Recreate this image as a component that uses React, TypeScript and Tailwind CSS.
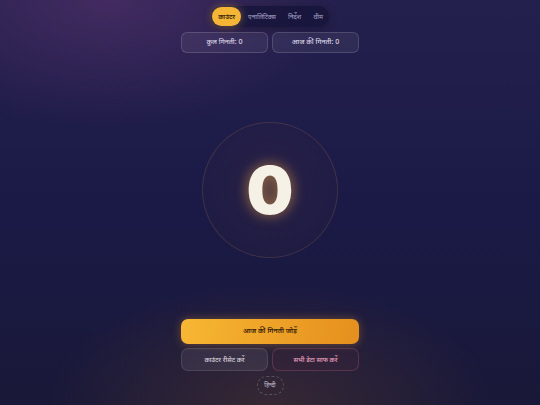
import { useState } from 'react'

const tabs = ['काउंटर', 'एनालिटिक्स', 'निर्देश', 'थीम']

export default function App() {
  const [active, setActive] = useState(0)
  const [count, setCount] = useState(0)

  return (
    <div
      className="relative flex h-[405px] w-full flex-col items-center overflow-hidden bg-[#1a1943] bg-[radial-gradient(ellipse_60%_45%_at_20%_0%,rgba(92,52,112,0.55),transparent_70%),radial-gradient(ellipse_55%_40%_at_50%_100%,rgba(90,60,45,0.45),transparent_75%),linear-gradient(180deg,#24204d_0%,#1b1a47_50%,#191838_100%)] text-[#e8e2ee]"
      style={{ fontFamily: '"Noto Sans", "Noto Sans Devanagari", "Lohit Devanagari", sans-serif' }}
    >
      <nav className="mt-[6px] flex h-[21px] items-center gap-[2px] rounded-full bg-[#15143a]/80 px-[1px] shadow-[0_2px_8px_rgba(0,0,0,0.3)]">
        {tabs.map((t, i) => (
          <button
            key={t}
            onClick={() => setActive(i)}
            className={
              i === active
                ? 'flex h-[19px] items-center rounded-full bg-[#f5b537] px-[6px] text-[6.5px] font-semibold text-[#3b260c] shadow-[0_0_8px_rgba(245,181,55,0.45)]'
                : 'flex h-[19px] items-center rounded-full px-[5px] text-[6.5px] text-[#a9a3c6]'
            }
          >
            {t}
          </button>
        ))}
      </nav>

      <div className="mt-[5px] grid w-[178px] grid-cols-2 gap-[4px]">
        <div className="flex h-[21px] items-center justify-center rounded-[6px] border border-white/15 bg-white/[0.06] text-[7px] font-medium text-[#ddd6e6]">
          कुल गिनती: {count}
        </div>
        <div className="flex h-[21px] items-center justify-center rounded-[6px] border border-white/15 bg-white/[0.06] text-[7px] font-medium text-[#ddd6e6]">
          आज की गिनती: {count}
        </div>
      </div>

      <div className="flex flex-1 items-center justify-center pt-[8px]">
        <div className="flex h-[136px] w-[136px] items-center justify-center rounded-full border border-[#f5b05a]/15 bg-[radial-gradient(circle,rgba(120,85,55,0.4)_0%,rgba(55,40,65,0.3)_35%,rgba(40,30,60,0.15)_100%)]">
          <span
            className="text-[66px] leading-none font-black text-[#f5f1e6] [text-shadow:0_0_14px_rgba(245,170,70,0.55)]"
            style={{ fontFamily: 'Inter, "Open Sans", sans-serif' }}
          >
            {count}
          </span>
        </div>
      </div>

      <div className="flex w-[178px] flex-col items-center gap-[4px] pb-[10px]">
        <button
          onClick={() => setCount(count + 1)}
          className="flex h-[25px] w-full items-center justify-center rounded-[7px] bg-[linear-gradient(100deg,#f7b733,#e58f1e)] text-[7px] font-semibold text-[#3a230b] shadow-[0_0_10px_rgba(240,160,50,0.35)]"
        >
          आज की गिनती जोड़ें
        </button>
        <div className="grid w-full grid-cols-2 gap-[4px]">
          <button
            onClick={() => setCount(0)}
            className="flex h-[23px] items-center justify-center rounded-[7px] border border-white/10 bg-white/[0.07] text-[6.5px] font-medium text-[#d9d2de]"
          >
            काउंटर रीसेट करें
          </button>
          <button
            onClick={() => setCount(0)}
            className="flex h-[23px] items-center justify-center rounded-[7px] border border-[#d86a8a]/25 bg-[#5a2a40]/15 text-[6.5px] font-medium text-[#eea3c0]"
          >
            सभी डेटा साफ करें
          </button>
        </div>
        <button className="mt-[1px] flex h-[19px] w-[27px] items-center justify-center rounded-full border border-dashed border-white/20 text-[6px] text-[#c9c2d6]">
          हिन्दी
        </button>
      </div>
    </div>
  )
}
